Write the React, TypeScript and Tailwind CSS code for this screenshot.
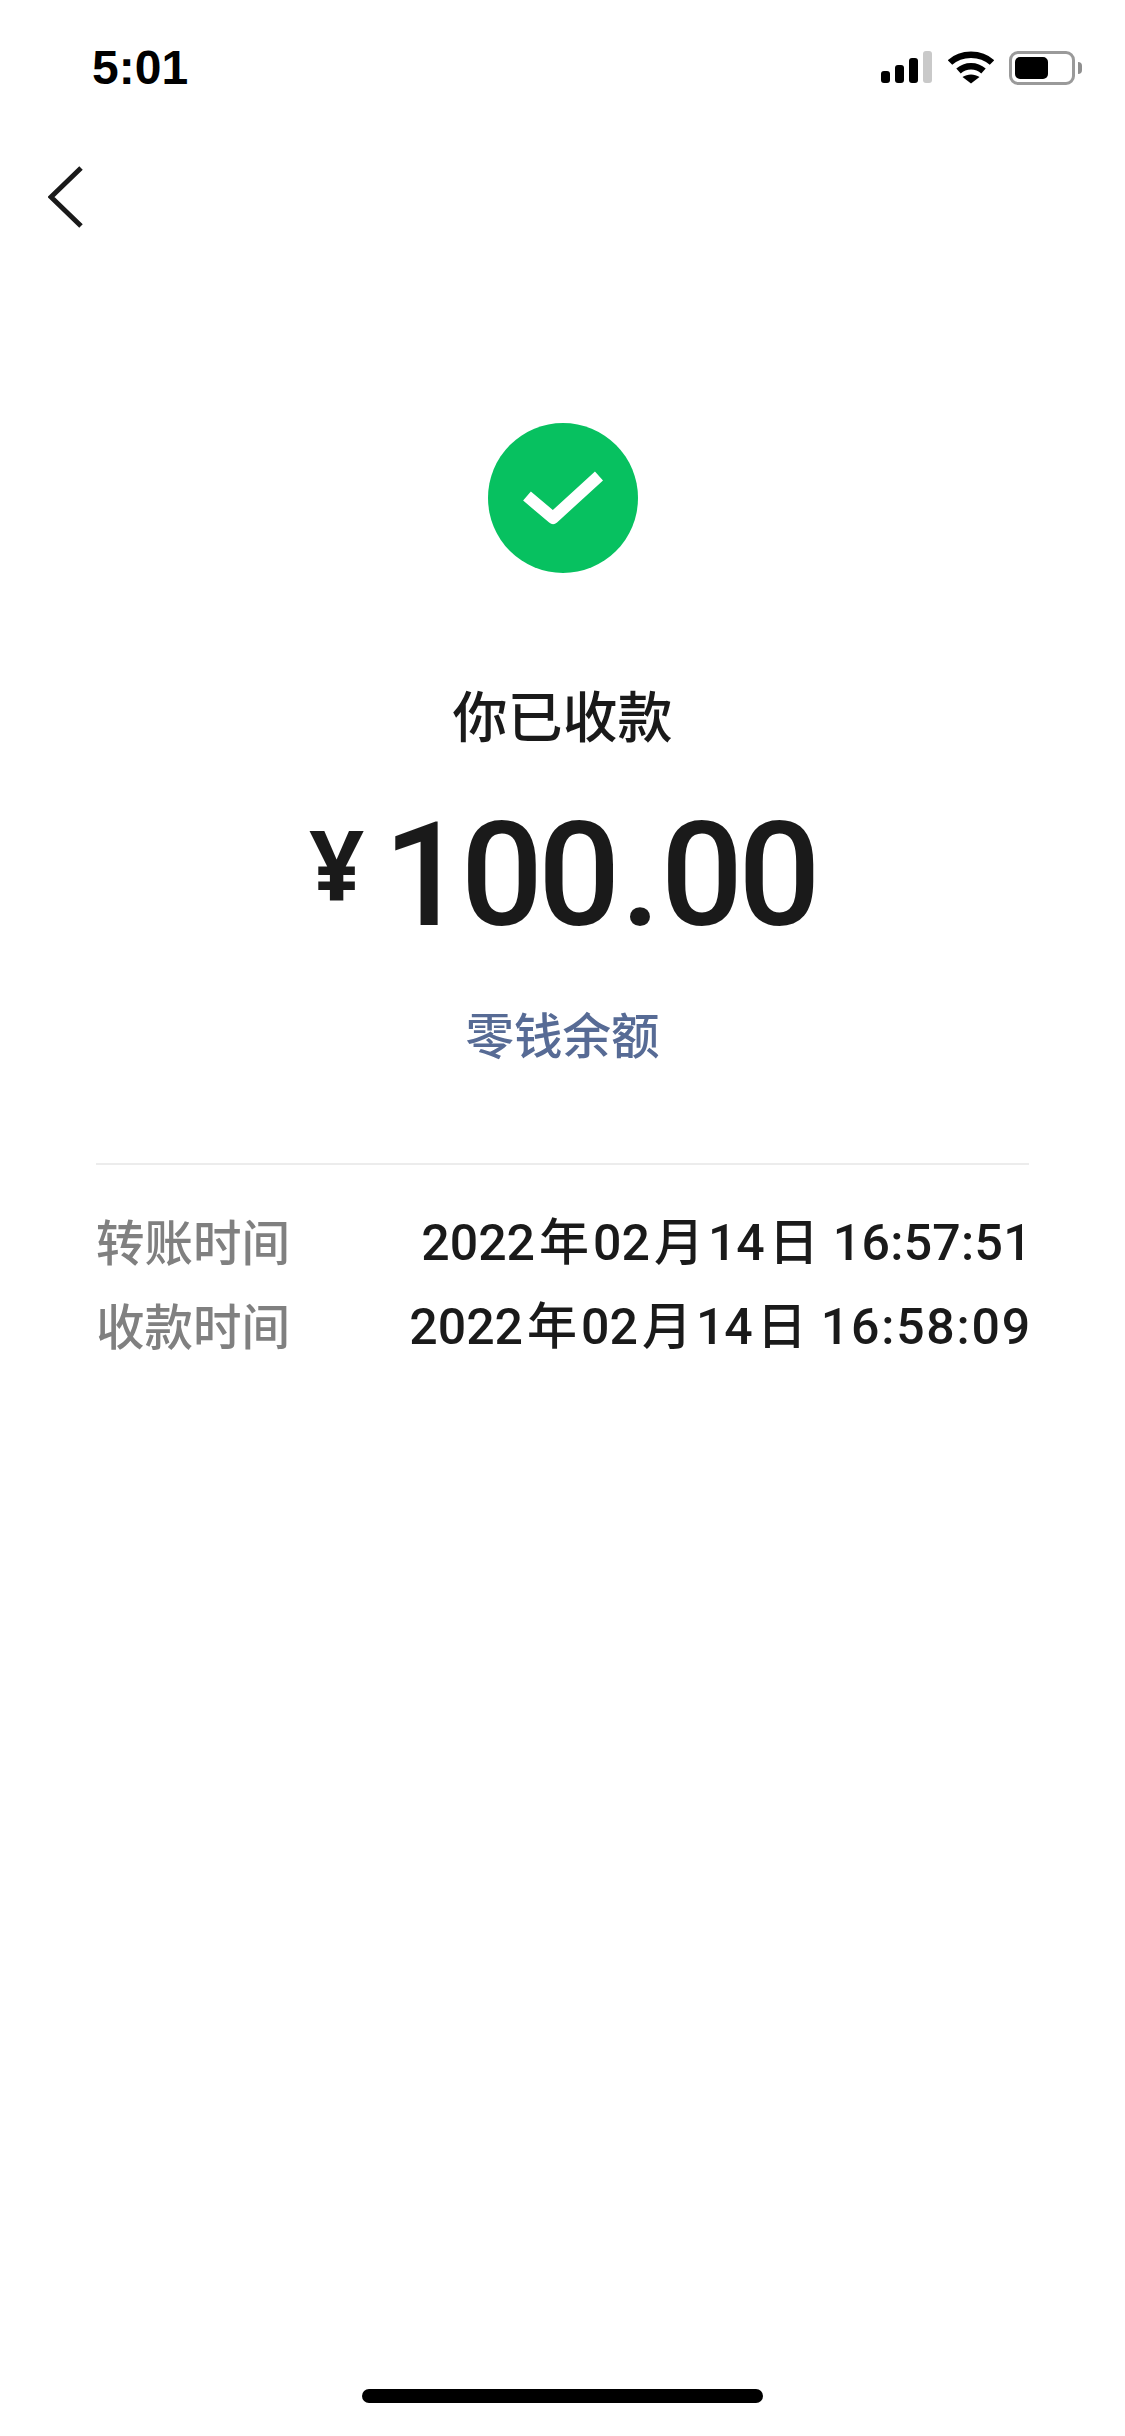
const cjk = "font-['Noto_Sans_CJK_SC',sans-serif]"

function StatusIcons() {
	return (
		<div className="flex items-end">
			<svg width="53" height="34" viewBox="0 0 53 34">
				<rect x="0" y="20" width="9" height="12" rx="3" fill="#000" />
				<rect x="14" y="14" width="9" height="18" rx="3" fill="#000" />
				<rect x="28" y="7" width="9" height="25" rx="3" fill="#000" />
				<rect x="42" y="0" width="9" height="32" rx="3" fill="#c9c9c9" />
			</svg>
			<svg width="46" height="34" viewBox="0 0 46 34" className="ml-[14px]">
				<path d="M2 11.5C13 1 33 1 44 11.5" fill="none" stroke="#000" strokeWidth="6.5" />
				<path d="M10.5 20C17.5 13.5 28.5 13.5 35.5 20" fill="none" stroke="#000" strokeWidth="6.5" />
				<path d="M23 32.5L14.5 26C19.5 22.5 26.5 22.5 31.5 26Z" fill="#000" />
			</svg>
			<div className="ml-[15px] flex items-center">
				<div className="h-[34px] w-[66px] rounded-[9px] border-[3px] border-[#9a9a9a] p-[3px]">
					<div className="h-full w-[33px] rounded-[5px] bg-black" />
				</div>
				<div className="ml-[3px] h-[12px] w-[4px] rounded-r-full bg-[#8f8f8f]" />
			</div>
		</div>
	)
}

function TimeRow({
	label,
	time,
	timeClass,
}: {
	label: string
	time: string
	timeClass: string
}) {
	return (
		<div className="flex h-[84px] items-center justify-between">
			<span className={`${cjk} mb-[5px] text-[48.5px] leading-none font-medium text-[#808080]`}>{label}</span>
			<span className="-mr-[3px] font-['Roboto','Noto_Sans_CJK_SC',sans-serif] text-[50px] leading-none font-medium text-[#1a1a1a]">
				2022
				<span className="mx-[4px]">年</span>
				02
				<span className="mx-[4px]">月</span>
				14
				<span className="mx-[4px]">日</span>
				<span className={`ml-[10px] ${timeClass}`}>{time}</span>
			</span>
		</div>
	)
}

export default function App() {
	return (
		<div className="flex min-h-[2436px] flex-col bg-white">
			{/* status bar */}
			<div className="flex h-[100px] items-end justify-between pr-[43px] pb-[15px] pl-[92px]">
				<span className="font-['Liberation_Sans',sans-serif] text-[48px] leading-[34px] font-bold text-black">
					5:01
				</span>
				<StatusIcons />
			</div>

			<div className="mt-[66px] pl-[48px]">
				<svg width="36" height="62" viewBox="0 0 36 62">
					<path d="M33 2L3 31L33 60" fill="none" stroke="#1a1a1a" strokeWidth="5" />
				</svg>
			</div>

			<div className="mt-[195px] flex flex-col items-center">
				<div className="flex h-[150px] w-[150px] items-center justify-center rounded-full bg-[#07c160]">
					<svg width="80" height="60" viewBox="0 0 80 60">
						<path d="M4 28L30 50L76 8" fill="none" stroke="#fff" strokeWidth="12" strokeLinejoin="round" />
					</svg>
				</div>
				<div className={`${cjk} mt-[111px] text-[55px] leading-[58px] font-medium text-[#1a1a1a]`}>你已收款</div>
				<div className="mt-[67px] flex h-[132px] items-center font-['Roboto',sans-serif] leading-none font-medium text-[#1a1a1a]">
					<span className="mr-[19px] mb-[24px] font-['Noto_Sans',sans-serif] text-[96px] font-bold">¥</span>
					<span className="text-[145px] tracking-[-5px]">
						100<span className="mx-[5px]">.</span>00
					</span>
				</div>
				<div className={`${cjk} mt-[64px] text-[48.5px] leading-[56px] font-medium text-[#576b95]`}>零钱余额</div>
			</div>

			<div className="mx-[96px] mt-[102px] border-t-2 border-[#ececec] pt-[36px]">
				<TimeRow label="转账时间" time="16:57:51" timeClass="tracking-[0.3px]" />
				<TimeRow label="收款时间" time="16:58:09" timeClass="tracking-[1.8px]" />
			</div>

			<div className="mt-auto flex justify-center pb-[33px]">
				<div className="h-[14px] w-[401px] rounded-full bg-black" />
			</div>
		</div>
	)
}
